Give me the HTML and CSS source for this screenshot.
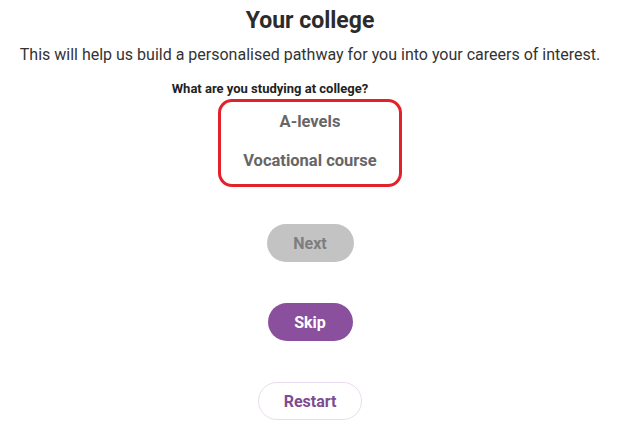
FILE: index.html
```html
<!DOCTYPE html>
<html lang="en">
<head>
<meta charset="utf-8">
<title>Your college</title>
<link rel="stylesheet" href="styles.css">
</head>
<body>
<main class="page">
  <h1 class="title">Your college</h1>
  <p class="intro">This will help us build a personalised pathway for you into your careers of interest.</p>
  <section class="question">
    <h2 class="question-label">What are you studying at college?</h2>
    <div class="options">
      <button class="option">A-levels</button>
      <button class="option">Vocational course</button>
    </div>
  </section>
  <div class="actions">
    <button class="btn btn-next" disabled>Next</button>
    <button class="btn btn-skip">Skip</button>
    <button class="btn btn-restart">Restart</button>
  </div>
</main>
</body>
</html>
```
FILE: styles.css
```css
* { box-sizing: border-box; }
html, body { margin: 0; padding: 0; background: #fff; }
body {
  font-family: Roboto, "Liberation Sans", Arial, sans-serif;
  color: #333;
}
.page {
  width: 620px;
  display: flex;
  flex-direction: column;
  align-items: center;
  padding-top: 7px;
}
.title {
  margin: 0;
  font-size: 23px;
  line-height: 28px;
  font-weight: 700;
  color: #2b2b2b;
}
.intro {
  margin: 10px 0 0;
  font-size: 16px;
  line-height: 20px;
  color: #333;
}
.question {
  margin-top: 16px;
  display: flex;
  flex-direction: column;
  align-items: center;
}
.question-label {
  margin: 0;
  font-size: 13px;
  line-height: 16px;
  font-weight: 700;
  color: #222;
  padding-right: 80px;
}
.options {
  margin-top: 2px;
  width: 184px;
  height: 88px;
  border: 3px solid #e3212b;
  border-radius: 14px;
  padding-bottom: 3px;
  display: flex;
  flex-direction: column;
  align-items: center;
  justify-content: center;
  gap: 19px;
}
.option {
  border: none;
  background: none;
  padding: 0;
  font-family: inherit;
  font-size: 16.5px;
  line-height: 20px;
  font-weight: 700;
  color: #666;
}
.actions {
  margin-top: 37px;
  display: flex;
  flex-direction: column;
  align-items: center;
  gap: 41px;
}
.btn {
  font-family: inherit;
  font-size: 16px;
  font-weight: 700;
  height: 38px;
  border-radius: 19px;
  border: 1px solid transparent;
  padding: 0;
}
.btn-next {
  width: 87px;
  background: #c3c3c3;
  color: #7e7e7e;
}
.btn-skip {
  width: 85px;
  background: #8a509d;
  color: #fff;
}
.btn-restart {
  width: 104px;
  background: #fff;
  color: #7d4c92;
  border-color: #eadcee;
}
```
